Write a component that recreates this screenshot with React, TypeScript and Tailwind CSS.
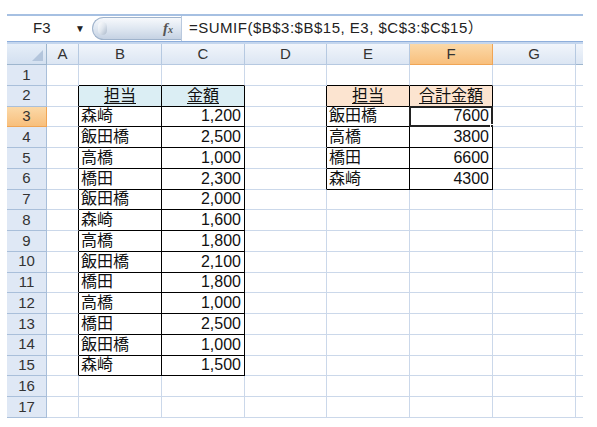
import React from 'react';

const COLS = ['', 'A', 'B', 'C', 'D', 'E', 'F', 'G', ''];

const names = ['森崎', '飯田橋', '高橋', '橋田', '飯田橋', '森崎', '高橋', '飯田橋', '橋田', '高橋', '橋田', '飯田橋', '森崎'];
const amounts = ['1,200', '2,500', '1,000', '2,300', '2,000', '1,600', '1,800', '2,100', '1,800', '1,000', '2,500', '1,000', '1,500'];
const sumNames = ['飯田橋', '高橋', '橋田', '森崎'];
const sumValues = ['7600', '3800', '6600', '4300'];

// table areas: [colFrom, colTo, rowFrom, rowTo] (col index in COLS, row number)
const tables = [
  [2, 3, 2, 15],
  [5, 6, 2, 6],
];

const inTable = (c: number, r: number) =>
  tables.some(([c0, c1, r0, r1]) => c >= c0 && c <= c1 && r >= r0 && r <= r1);

const cellBorder = (c: number, r: number) => {
  const right = inTable(c, r) || inTable(c + 1, r);
  const bottom = inTable(c, r) || inTable(c, r + 1);
  if (c === 8) return bottom ? 'border-b border-black' : 'border-b border-[#cbd8ea]';
  if (right && bottom) return 'border-r border-b border-black';
  if (right) return 'border-r border-b border-r-black border-b-[#cbd8ea]';
  if (bottom) return 'border-r border-b border-r-[#cbd8ea] border-b-black';
  return 'border-r border-b border-[#cbd8ea]';
};

const cellContent = (c: number, r: number): React.ReactNode => {
  if (r === 2 && c === 2) return <span className="underline underline-offset-2">担当</span>;
  if (r === 2 && c === 3) return <span className="underline underline-offset-2">金額</span>;
  if (r === 2 && c === 5) return <span className="underline underline-offset-2">担当</span>;
  if (r === 2 && c === 6) return <span className="underline underline-offset-2">合計金額</span>;
  if (r >= 3 && r <= 15 && c === 2) return names[r - 3];
  if (r >= 3 && r <= 15 && c === 3) return amounts[r - 3];
  if (r >= 3 && r <= 6 && c === 5) return sumNames[r - 3];
  if (r >= 3 && r <= 6 && c === 6) return sumValues[r - 3];
  return null;
};

const cellAlign = (c: number, r: number) => {
  if (r === 2) return 'justify-center';
  if (c === 3 || c === 6) return 'justify-end pr-[3px]';
  return 'justify-start pl-[2px]';
};

const cellFill = (c: number, r: number) => {
  if (r === 2 && (c === 2 || c === 3)) return 'bg-[#dbeef4]';
  if (r === 2 && (c === 5 || c === 6)) return 'bg-[#fce4d0]';
  return 'bg-white';
};

const FormulaBar = () => (
  <div className="flex h-[27px] border-t-2 border-[#a6c0e2] bg-white">
    <div className="flex w-[85px] items-center">
      <span className="w-[68px] pl-[26px] text-[15px] text-[#222]">F3</span>
      <span className="text-[10px] text-[#222]">▼</span>
    </div>
    <div className="my-[1px] flex w-[89px] items-center rounded-l-full border border-r-0 border-[#9fb3cc] bg-gradient-to-b from-[#f7f9fc] via-[#dfe7f1] to-[#c5d2e3]">
      <div className="ml-[5px] h-[13px] w-[9px] rounded-full bg-gradient-to-br from-white via-[#dfe6ee] to-[#aab8ca]" />
      <span className="ml-auto mr-[8px] font-['Liberation_Serif',serif] text-[15px] font-bold italic text-[#555]">
        f<span className="text-[10px]">x</span>
      </span>
    </div>
    <div className="flex flex-1 items-center border-l border-[#b9c9de] pl-[7px] text-[15px] tracking-[0.5px] text-[#222]">
      =SUMIF($B$3:$B$15, E3, $C$3:$C$15）
    </div>
  </div>
);

export default function App() {
  const rows = Array.from({ length: 17 }, (_, i) => i + 1);
  return (
    <div className="h-[427px] w-[597px] overflow-hidden bg-white pl-[7px] pt-[14px] font-['Liberation_Sans','Noto_Sans_CJK_JP',sans-serif]">
      <div className="w-[576px]">
        <FormulaBar />
        <div className="h-[3px] border-t border-[#8eaedb] bg-[#c4d6ee]" />
        <div className="grid grid-cols-[40px_32px_83px_83px_82px_83px_83px_83px_7px] grid-rows-[21px_repeat(17,20.75px)]">
          {COLS.map((col, c) => {
            if (c === 0)
              return (
                <div key="corner" className="relative border-r border-b border-[#9eb6ce] bg-gradient-to-b from-[#e6eef8] to-[#d3e0f0]">
                  <svg className="absolute bottom-[3px] right-[3px]" width="11" height="11" viewBox="0 0 11 11">
                    <polygon points="11,0 11,11 0,11" fill="#b3c5dc" />
                  </svg>
                </div>
              );
            const selected = col === 'F';
            return (
              <div
                key={'h' + c}
                className={
                  selected
                    ? 'flex items-center justify-center border-r border-b border-[#f0a555] bg-gradient-to-b from-[#fbd9a8] to-[#f8bf7c] text-[15px] text-[#333]'
                    : c === 8
                      ? 'border-b border-[#9eb6ce] bg-gradient-to-b from-[#f1f5fb] to-[#dce6f3]'
                      : 'flex items-center justify-center border-r border-b border-[#b6c9e1] bg-gradient-to-b from-[#f1f5fb] to-[#dce6f3] text-[15px] text-[#333]'
                }
              >
                {col}
              </div>
            );
          })}
          {rows.map((r) =>
            COLS.map((_, c) => {
              if (c === 0)
                return (
                  <div
                    key={r + '-0'}
                    className={
                      r === 3
                        ? 'flex items-center justify-center border-r border-b border-[#f0a555] bg-gradient-to-b from-[#fbd9a8] to-[#f8bf7c] text-[15px] text-[#333]'
                        : 'flex items-center justify-center border-r border-b border-[#a9bfda] bg-[#dfe8f5] text-[15px] text-[#333]'
                    }
                  >
                    {r}
                  </div>
                );
              const selected = r === 3 && c === 6;
              return (
                <div
                  key={r + '-' + c}
                  className={`relative flex items-center overflow-visible text-[16px] leading-none text-[#111] ${cellBorder(c, r)} ${cellFill(c, r)} ${cellAlign(c, r)}`}
                >
                  {cellContent(c, r)}
                  {selected && (
                    <>
                      <div className="absolute -left-[1px] -top-[1px] bottom-[-1px] right-[-1px] border-2 border-[#222]" />
                      <div className="absolute -bottom-[3px] -right-[3px] h-[5px] w-[5px] border border-white bg-[#222]" />
                    </>
                  )}
                </div>
              );
            })
          )}
        </div>
      </div>
    </div>
  );
}
